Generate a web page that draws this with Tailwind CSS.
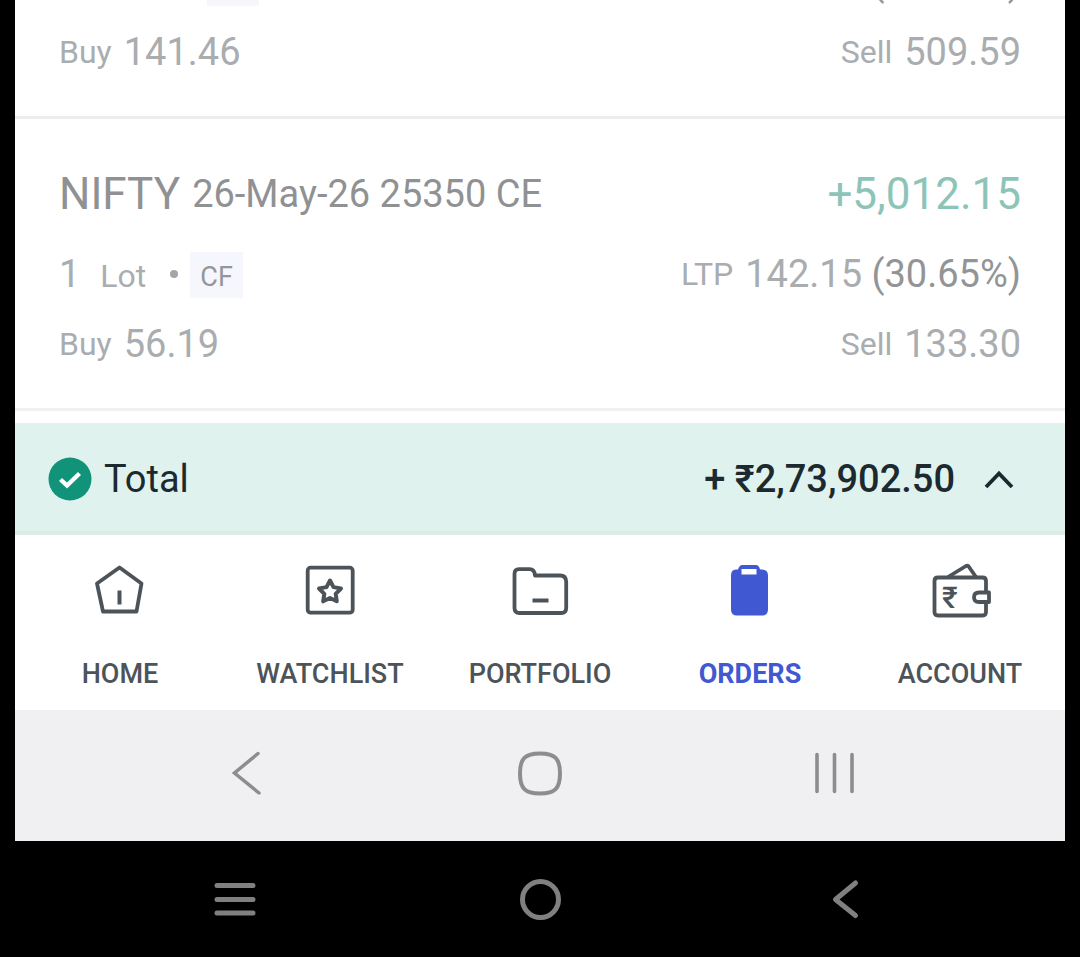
<!DOCTYPE html>
<html lang="en">
	<head>
		<meta charset="UTF-8" />
		<meta
			name="viewport"
			content="width=device-width, initial-scale=1.0"
		/>
		<script src="https://cdn.jsdelivr.net/npm/@tailwindcss/browser@4"></script>

		<title>Orders</title>
	</head>
	<body
		class="flex h-screen flex-col bg-black font-['Roboto','Noto_Sans',sans-serif]"
	>
		<div class="mx-[15px] flex min-h-0 flex-1 flex-col bg-white">
			<!-- closed positions, scrolled to the end -->
			<main
				class="flex min-h-0 flex-1 flex-col justify-end overflow-hidden pb-3 text-[38px] leading-[48px] text-[#a9adb0]"
			>
				<section class="border-b-3 border-[#ededee] px-11 pb-10">
					<div class="flex h-12 items-center justify-between">
						<div class="flex h-12 items-baseline">
							<span>3</span>
							<span class="ml-5 text-[32px]">Lots</span>
							<span class="ml-6 mr-3 size-2 self-center rounded-full bg-[#a3a5a8]"></span>
							<span class="self-end bg-[#f6f7fd] px-[10px] pt-1 text-[27px] leading-[42px] text-[#949699]">CF</span>
						</div>
						<div class="flex items-center gap-3">
							<span class="text-[32px]">LTP</span>
							<span>509.60 <span class="text-[#929496]">(260.2%)</span></span>
						</div>
					</div>
					<div class="mt-[22px] flex items-center justify-between">
						<div class="flex items-center gap-3">
							<span class="text-[32px]">Buy</span>
							<span>141.46</span>
						</div>
						<div class="flex items-center gap-3">
							<span class="text-[32px]">Sell</span>
							<span>509.59</span>
						</div>
					</div>
				</section>

				<section class="border-b-3 border-[#f0f0f1] px-11 pb-10 pt-[49px]">
					<div class="flex items-center justify-between leading-[52px]">
						<h2 class="flex items-center gap-3 text-[#8f9193]">
							<span class="text-[44px]">NIFTY</span>
							<span>26-May-26 25350 CE</span>
						</h2>
						<span class="text-[44px] text-[#8cc5b8]">+5,012.15</span>
					</div>
					<div class="mt-[30px] flex h-12 items-center justify-between">
						<div class="flex h-12 items-baseline">
							<span>1</span>
							<span class="ml-5 text-[32px]">Lot</span>
							<span class="ml-6 mr-3 size-2 self-center rounded-full bg-[#a3a5a8]"></span>
							<span class="self-end bg-[#f6f7fd] px-[10px] pt-1 text-[27px] leading-[42px] text-[#949699]">CF</span>
						</div>
						<div class="flex items-center gap-3">
							<span class="text-[32px]">LTP</span>
							<span>142.15 <span class="text-[#929496]">(30.65%)</span></span>
						</div>
					</div>
					<div class="mt-[22px] flex items-center justify-between">
						<div class="flex items-center gap-3">
							<span class="text-[32px]">Buy</span>
							<span>56.19</span>
						</div>
						<div class="flex items-center gap-3">
							<span class="text-[32px]">Sell</span>
							<span>133.30</span>
						</div>
					</div>
				</section>
			</main>

			<!-- total P&L -->
			<div
				class="flex h-28 items-center justify-between border-b-4 border-[#dcebe6] bg-[#dff2ed] pl-[33px] pr-[50px] pt-1 text-[38px] leading-[48px] text-[#1c2a30]"
			>
				<div class="flex items-center gap-3">
					<svg class="size-11" viewBox="0 0 44 44" fill="none">
						<circle cx="22" cy="22" r="21.5" fill="#11937a" />
						<path d="M12.500 22.500l6.500 6L31.500 16.500" stroke="#fff" stroke-width="4.400" />
					</svg>
					<span>Total</span>
				</div>
				<div class="flex items-center gap-7">
					<span class="font-medium">+ ₹2,73,902.50</span>
					<button type="button" aria-label="Show details">
						<svg class="h-6 w-8" viewBox="0 0 32 24" fill="none">
							<path d="M3 20L16 6.500l13 13.500" stroke="#1c2a30" stroke-width="3.800" />
						</svg>
					</button>
				</div>
			</div>

			<nav
				class="grid grid-cols-5 pb-[18px] pt-6 text-[27px] leading-9 font-medium text-[#4c545a]"
			>
				<a href="#" class="flex flex-col items-center gap-[33px]">
					<svg class="size-16" viewBox="0 0 64 64" fill="none" stroke="currentColor">
						<path d="M31.500 8.500L53.500 24.500 48.500 52.500H15L9 24.500z" stroke-width="3.800" stroke-linejoin="round" />
						<path d="M31.500 31.500v14" stroke-width="4" />
					</svg>
					<span>HOME</span>
				</a>
				<a href="#" class="flex flex-col items-center gap-[33px]">
					<svg class="size-16" viewBox="0 0 64 64" fill="none" stroke="currentColor">
						<rect x="9.700" y="8.700" width="45" height="45" rx="3" stroke-width="3.800" />
						<path d="M32 21.500l3.500 6.600 7.500 1.400-5.300 5.400 1.100 7.400-6.800-3.300-6.800 3.300 1.100-7.400L21 29.500l7.500-1.400z" stroke-width="4" stroke-linejoin="round" />
					</svg>
					<span>WATCHLIST</span>
				</a>
				<a href="#" class="flex flex-col items-center gap-[33px]">
					<svg class="size-16" viewBox="0 0 64 64" fill="none" stroke="currentColor">
						<path d="M11 10.200h10.500q5 0 5.500 6.300H52q6.200 0 6.200 6.500v26q0 5-5 5H11.500q-5 0-5-5V15q0-4.800 4.500-4.800z" stroke-width="3.800" stroke-linejoin="round" />
						<path d="M24.500 41.500h16" stroke-width="4" />
					</svg>
					<span>PORTFOLIO</span>
				</a>
				<a href="#" aria-current="page" class="flex flex-col items-center gap-[33px] font-bold text-[#4059d2]">
					<svg class="size-16" viewBox="0 0 64 64">
						<path fill="currentColor" fill-rule="evenodd" d="M18 10.500h2q1.500-4.500 4-4.500h14q3 0 4 4.500h2q6 0 6 6v34q0 6-6 6H19q-6 0-6-6V16.500q0-6 5-6zM23.500 10v5.500h15V10z" />
					</svg>
					<span>ORDERS</span>
				</a>
				<a href="#" class="flex flex-col items-center gap-[33px]">
					<svg class="size-16" viewBox="0 0 64 64" fill="none" stroke="currentColor" stroke-width="3.800">
						<path d="M58 32V22q0-3.500-3.500-3.500H10Q6.500 18.500 6.500 22v31q0 3.500 3.500 3.500h44.500q3.500 0 3.500-3.500v-9" />
						<path d="M20 18L38 7q2-1 3 1l7 10" stroke-linejoin="round" />
						<path d="M61 33.500H51q-5 0-5 4.700t5 4.800h10z" stroke-linejoin="round" />
						<text x="14" y="49" font-size="30" font-weight="500" fill="currentColor" stroke="none">₹</text>
					</svg>
					<span>ACCOUNT</span>
				</a>
			</nav>

			<!-- gesture bar inside the app screen -->
			<div class="grid grid-cols-3 justify-items-center bg-[#f0f0f2] px-[84px] pb-[43px] pt-10 text-[#8d8d8f]">
				<button type="button" aria-label="Back">
					<svg class="size-12" viewBox="0 0 48 48" fill="none" stroke="currentColor" stroke-width="3.500" stroke-linecap="round">
						<path d="M36 3.500L12.500 23 37 43" />
					</svg>
				</button>
				<button type="button" aria-label="Home">
					<svg class="size-12" viewBox="0 0 48 48" fill="none" stroke="currentColor" stroke-width="4">
						<path d="M24 3.500c15 0 20 5 20 20s-5 20-20 20-20-5-20-20 5-20 20-20z" />
					</svg>
				</button>
				<button type="button" aria-label="Recent apps">
					<svg class="size-12" viewBox="0 0 48 48" fill="none" stroke="currentColor" stroke-width="3.600" stroke-linecap="round">
						<path d="M7 4.500v37M24.500 4.500v37M42 4.500v37" />
					</svg>
				</button>
			</div>
		</div>

		<!-- phone navigation -->
		<div class="grid grid-cols-3 justify-items-center px-[82px] py-[34px] text-[#808080]">
			<button type="button" aria-label="Menu">
				<svg class="size-12" viewBox="0 0 48 48" fill="none" stroke="currentColor" stroke-width="5" stroke-linecap="round">
					<path d="M6 10.500h36M6 24.500h36M6 38h36" />
				</svg>
			</button>
			<button type="button" aria-label="Home">
				<svg class="size-12" viewBox="0 0 48 48" fill="none" stroke="currentColor" stroke-width="5">
					<circle cx="24.500" cy="24.500" r="18" />
				</svg>
			</button>
			<button type="button" aria-label="Back">
				<svg class="size-12" viewBox="0 0 48 48" fill="none" stroke="currentColor" stroke-width="5" stroke-linecap="round" stroke-linejoin="round">
					<path d="M34.500 8L14.500 24.500l20 16" />
				</svg>
			</button>
		</div>
	</body>
</html>
